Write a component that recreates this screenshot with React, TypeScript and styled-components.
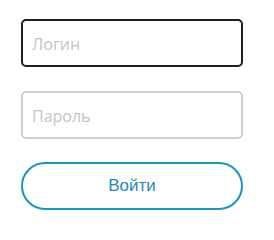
import React from "react";
import styled, { createGlobalStyle } from "styled-components";

const Global = createGlobalStyle`
  html, body { margin: 0; padding: 0; background: #ffffff; }
  body { font-family: "Liberation Sans", Arial, sans-serif; }
`;

const Form = styled.form`
  width: 222px;
  padding: 19px 0 0 21px;
  display: flex;
  flex-direction: column;
  gap: 24px;
`;

const Field = styled.input<{ $focused?: boolean }>`
  box-sizing: border-box;
  width: 100%;
  height: 48px;
  margin: 0;
  padding: 1px 9px 0;
  border: 2px solid ${(p) => (p.$focused ? "#1f1f1f" : "#cfcfcf")};
  border-radius: 5px;
  background: #fff;
  font-family: "Open Sans", "Noto Sans", sans-serif;
  font-size: 16px;
  color: #333;
  outline: none;
  &::placeholder {
    color: #c4c4c4;
  }
`;

const Submit = styled.button`
  box-sizing: border-box;
  width: 100%;
  height: 48px;
  margin: -1px 0 0 0;
  border: 2px solid #1b95b8;
  border-radius: 24px;
  background: #fff;
  color: #2789b8;
  font-family: "Liberation Sans", Arial, sans-serif;
  font-size: 17px;
  cursor: pointer;
`;

export default function App() {
  return (
    <>
      <Global />
      <Form onSubmit={(e) => e.preventDefault()}>
        <Field $focused placeholder="Логин" />
        <Field type="password" placeholder="Пароль" />
        <Submit type="submit">Войти</Submit>
      </Form>
    </>
  );
}
